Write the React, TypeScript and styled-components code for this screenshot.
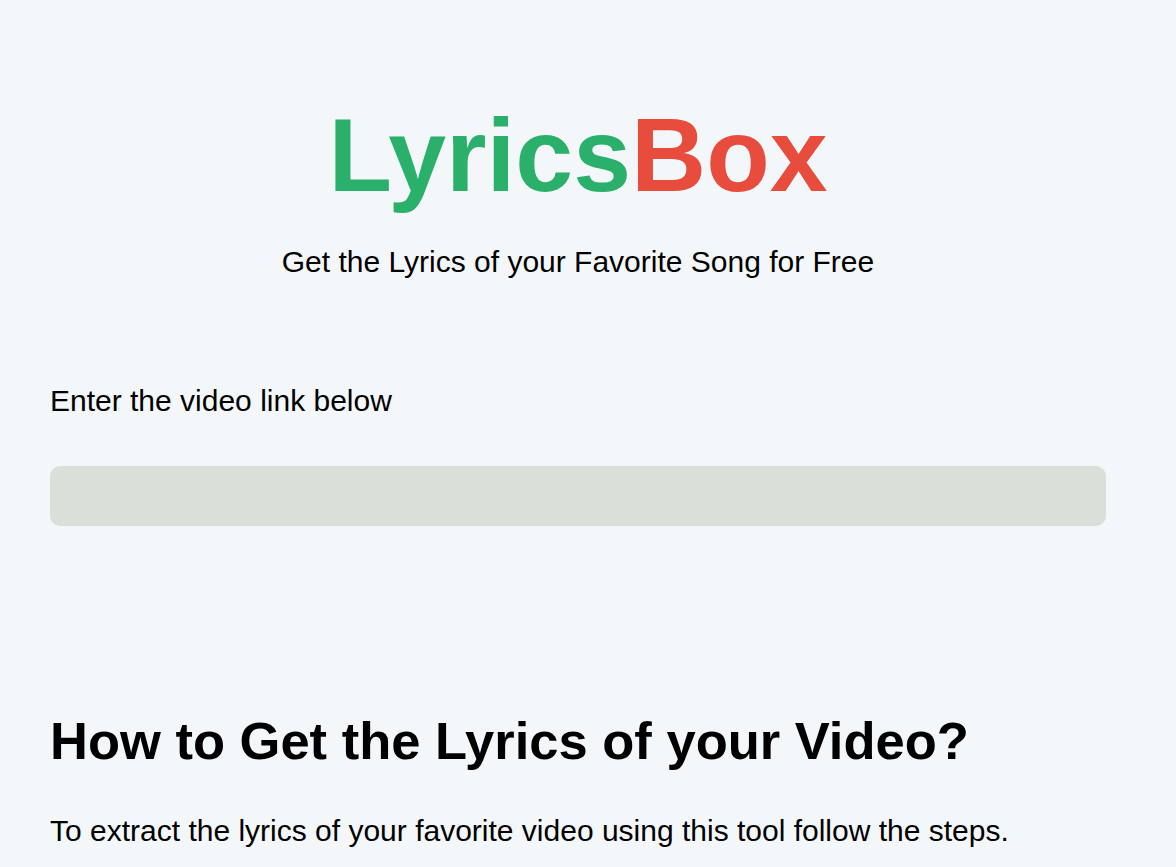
import React from "react";
import styled, { createGlobalStyle } from "styled-components";

const GlobalStyle = createGlobalStyle`
  html, body {
    margin: 0;
    padding: 0;
    background: #f4f7fa;
  }
  body {
    font-family: "Liberation Sans", Arial, sans-serif;
    color: #000;
  }
`;

const Page = styled.main`
  box-sizing: border-box;
  width: 1156px;
  padding: 96px 50px 40px;
  display: flex;
  flex-direction: column;
`;

const Hero = styled.header`
  display: flex;
  flex-direction: column;
  align-items: center;
  gap: 30px;
`;

const Logo = styled.h1`
  margin: 0;
  font-size: 104px;
  font-weight: 700;
  line-height: normal;
`;

const LogoPart = styled.span<{ $tone: "green" | "red" }>`
  color: ${(p) => (p.$tone === "green" ? "#2ab06b" : "#e84c3d")};
`;

const Tagline = styled.p`
  margin: 0;
  font-size: 30px;
  line-height: normal;
`;

const Form = styled.form`
  display: flex;
  flex-direction: column;
  gap: 48px;
  margin-top: 105px;
`;

const Label = styled.label`
  font-size: 30px;
  line-height: normal;
`;

const LinkInput = styled.input`
  box-sizing: border-box;
  width: 100%;
  height: 60px;
  border: none;
  outline: none;
  border-radius: 10px;
  background: #dbdfda;
  padding: 0 20px;
  font-family: inherit;
  font-size: 24px;
`;

const Section = styled.section`
  margin-top: 184px;
  display: flex;
  flex-direction: column;
  gap: 43px;
`;

const Heading = styled.h2`
  margin: 0;
  font-size: 52.5px;
  font-weight: 700;
  line-height: normal;
`;

const Text = styled.p`
  margin: 0;
  font-size: 30px;
  line-height: normal;
`;

export default function App() {
  return (
    <>
      <GlobalStyle />
      <Page>
        <Hero>
          <Logo>
            <LogoPart $tone="green">Lyrics</LogoPart>
            <LogoPart $tone="red">Box</LogoPart>
          </Logo>
          <Tagline>Get the Lyrics of your Favorite Song for Free</Tagline>
        </Hero>
        <Form onSubmit={(e) => e.preventDefault()}>
          <Label htmlFor="video-link">Enter the video link below</Label>
          <LinkInput id="video-link" type="text" />
        </Form>
        <Section>
          <Heading>How to Get the Lyrics of your Video?</Heading>
          <Text>To extract the lyrics of your favorite video using this tool follow the steps.</Text>
        </Section>
      </Page>
    </>
  );
}
